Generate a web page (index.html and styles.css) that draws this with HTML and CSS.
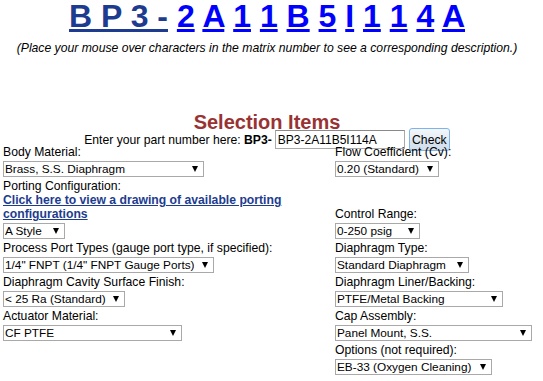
FILE: index.html
```html
<!DOCTYPE html>
<html lang="en">

<head>
    <meta charset="UTF-8">
    <meta name="viewport" content="width=device-width, initial-scale=1.0">
    <title>BP3 Part Number Builder</title>
    <link rel="stylesheet" href="styles.css">
</head>

<body>
    <div class="page">

        <!-- Matrix number -->
        <h1 class="matrix">
            <a class="prefix" href="#">B P 3 -</a>
            <a href="#">2</a> <a href="#">A</a> <a href="#">1</a> <a href="#">1</a> <a href="#">B</a> <a href="#">5</a> <a href="#">I</a> <a href="#">1</a> <a href="#">1</a> <a href="#">4</a> <a href="#">A</a>
        </h1>
        <p class="hint">(Place your mouse over characters in the matrix number to see a corresponding description.)</p>

        <h2 class="section-title">Selection Items</h2>

        <form class="partline" onsubmit="return false">
            <span>Enter your part number here: <b>BP3-</b></span>
            <input type="text" class="part-input" value="BP3-2A11B5I114A">
            <button type="button" class="check-btn">Check</button>
        </form>

        <!-- Options table -->
        <div class="options">
            <div class="cell">
                <div class="label">Body Material:</div>
                <span class="pick"><select class="sel-body"><option>Brass, S.S. Diaphragm</option></select></span>
            </div>
            <div class="cell">
                <div class="label">Flow Coefficient (Cv):</div>
                <span class="pick"><select class="sel-flow"><option>0.20 (Standard)</option></select></span>
            </div>

            <div class="cell">
                <div class="label">Porting Configuration:</div>
                <a class="drawing-link" href="#">Click here to view a drawing of available porting configurations</a>
                <span class="pick"><select class="sel-style"><option>A Style</option></select></span>
            </div>
            <div class="cell cell-bottom">
                <div class="label">Control Range:</div>
                <span class="pick"><select class="sel-range"><option>0-250 psig</option></select></span>
            </div>

            <div class="cell">
                <div class="label">Process Port Types (gauge port type, if specified):</div>
                <span class="pick"><select class="sel-port"><option>1/4" FNPT (1/4" FNPT Gauge Ports)</option></select></span>
            </div>
            <div class="cell">
                <div class="label">Diaphragm Type:</div>
                <span class="pick"><select class="sel-type"><option>Standard Diaphragm</option></select></span>
            </div>

            <div class="cell">
                <div class="label">Diaphragm Cavity Surface Finish:</div>
                <span class="pick"><select class="sel-finish"><option>&lt; 25 Ra (Standard)</option></select></span>
            </div>
            <div class="cell">
                <div class="label">Diaphragm Liner/Backing:</div>
                <span class="pick"><select class="sel-liner"><option>PTFE/Metal Backing</option></select></span>
            </div>

            <div class="cell">
                <div class="label">Actuator Material:</div>
                <span class="pick"><select class="sel-actuator"><option>CF PTFE</option></select></span>
            </div>
            <div class="cell">
                <div class="label">Cap Assembly:</div>
                <span class="pick"><select class="sel-cap"><option>Panel Mount, S.S.</option></select></span>
            </div>

            <div class="cell"></div>
            <div class="cell">
                <div class="label">Options (not required):</div>
                <span class="pick"><select class="sel-extra"><option>EB-33 (Oxygen Cleaning)</option></select></span>
            </div>
        </div>

    </div>
</body>

</html>
```

FILE: styles.css
```css
body {
    margin: 0;
    font-family: "Liberation Sans", Arial, sans-serif;
    font-size: 12.2px;
    color: #000;
    background: #fff;
}

.page {
    width: 534px;
}

/* Matrix number */
.matrix {
    margin: -2px 0 0;
    text-align: center;
    font-size: 32px;
    line-height: 36px;
    font-weight: bold;
}

.matrix a {
    color: #0000ff;
    text-decoration-thickness: 3px;
}

.matrix .prefix {
    color: #1d3c8f;
}

.hint {
    margin: 7px 0 0;
    text-align: center;
    font-style: italic;
    line-height: 14px;
}

.section-title {
    margin: 56px 0 0;
    text-align: center;
    font-size: 20px;
    line-height: 23px;
    color: #993333;
}

/* Part number line */
.partline {
    display: flex;
    justify-content: center;
    align-items: center;
    height: 11px;
    margin: 0;
    line-height: 14px;
}

.part-input {
    box-sizing: border-box;
    width: 130px;
    height: 19px;
    margin: 0 0 0 3px;
    padding: 0 2px;
    border: 1px solid #a9a9a9;
    border-top-color: #8a8a8a;
    font-family: inherit;
    font-size: 12px;
}

.check-btn {
    box-sizing: border-box;
    width: 41px;
    height: 23px;
    margin: 0 0 0 4px;
    padding: 0;
    border: 1px solid #7eb4ea;
    border-radius: 3px;
    background: linear-gradient(#f2f7fb, #e3ebf3 50%, #d9e4ee 51%, #d2dfeb);
    font-family: inherit;
    font-size: 12.2px;
    color: #000;
}

/* Options table */
.options {
    display: grid;
    grid-template-columns: 332px 1fr;
    row-gap: 2px;
    padding-left: 3px;
}

.cell {
    display: flex;
    flex-direction: column;
    align-items: flex-start;
}

.cell-bottom {
    justify-content: flex-end;
}

.label {
    line-height: 14px;
}

.drawing-link {
    font-weight: bold;
    line-height: 14px;
    color: #1d3c8f;
}

.pick {
    position: relative;
    display: inline-block;
    margin-top: 2px;
}

.pick::after {
    content: "";
    position: absolute;
    right: 6px;
    top: 5px;
    border-left: 3px solid transparent;
    border-right: 3px solid transparent;
    border-top: 6px solid #000;
    pointer-events: none;
}

.pick select {
    display: block;
    box-sizing: border-box;
    height: 16px;
    margin: 0;
    padding: 0 0 0 1px;
    border: 1px solid #a9a9a9;
    border-radius: 0;
    background: #fff;
    font-family: inherit;
    font-size: 11.8px;
    color: #000;
    -webkit-appearance: none;
    appearance: none;
}

.sel-body { width: 201px; }
.sel-flow { width: 104px; }
.sel-style { width: 62px; }
.sel-range { width: 85px; }
.sel-port { width: 211px; }
.sel-type { width: 134px; }
.sel-finish { width: 122px; }
.sel-liner { width: 168px; }
.sel-actuator { width: 179px; }
.sel-cap { width: 197px; }
.sel-extra { width: 157px; }
```
